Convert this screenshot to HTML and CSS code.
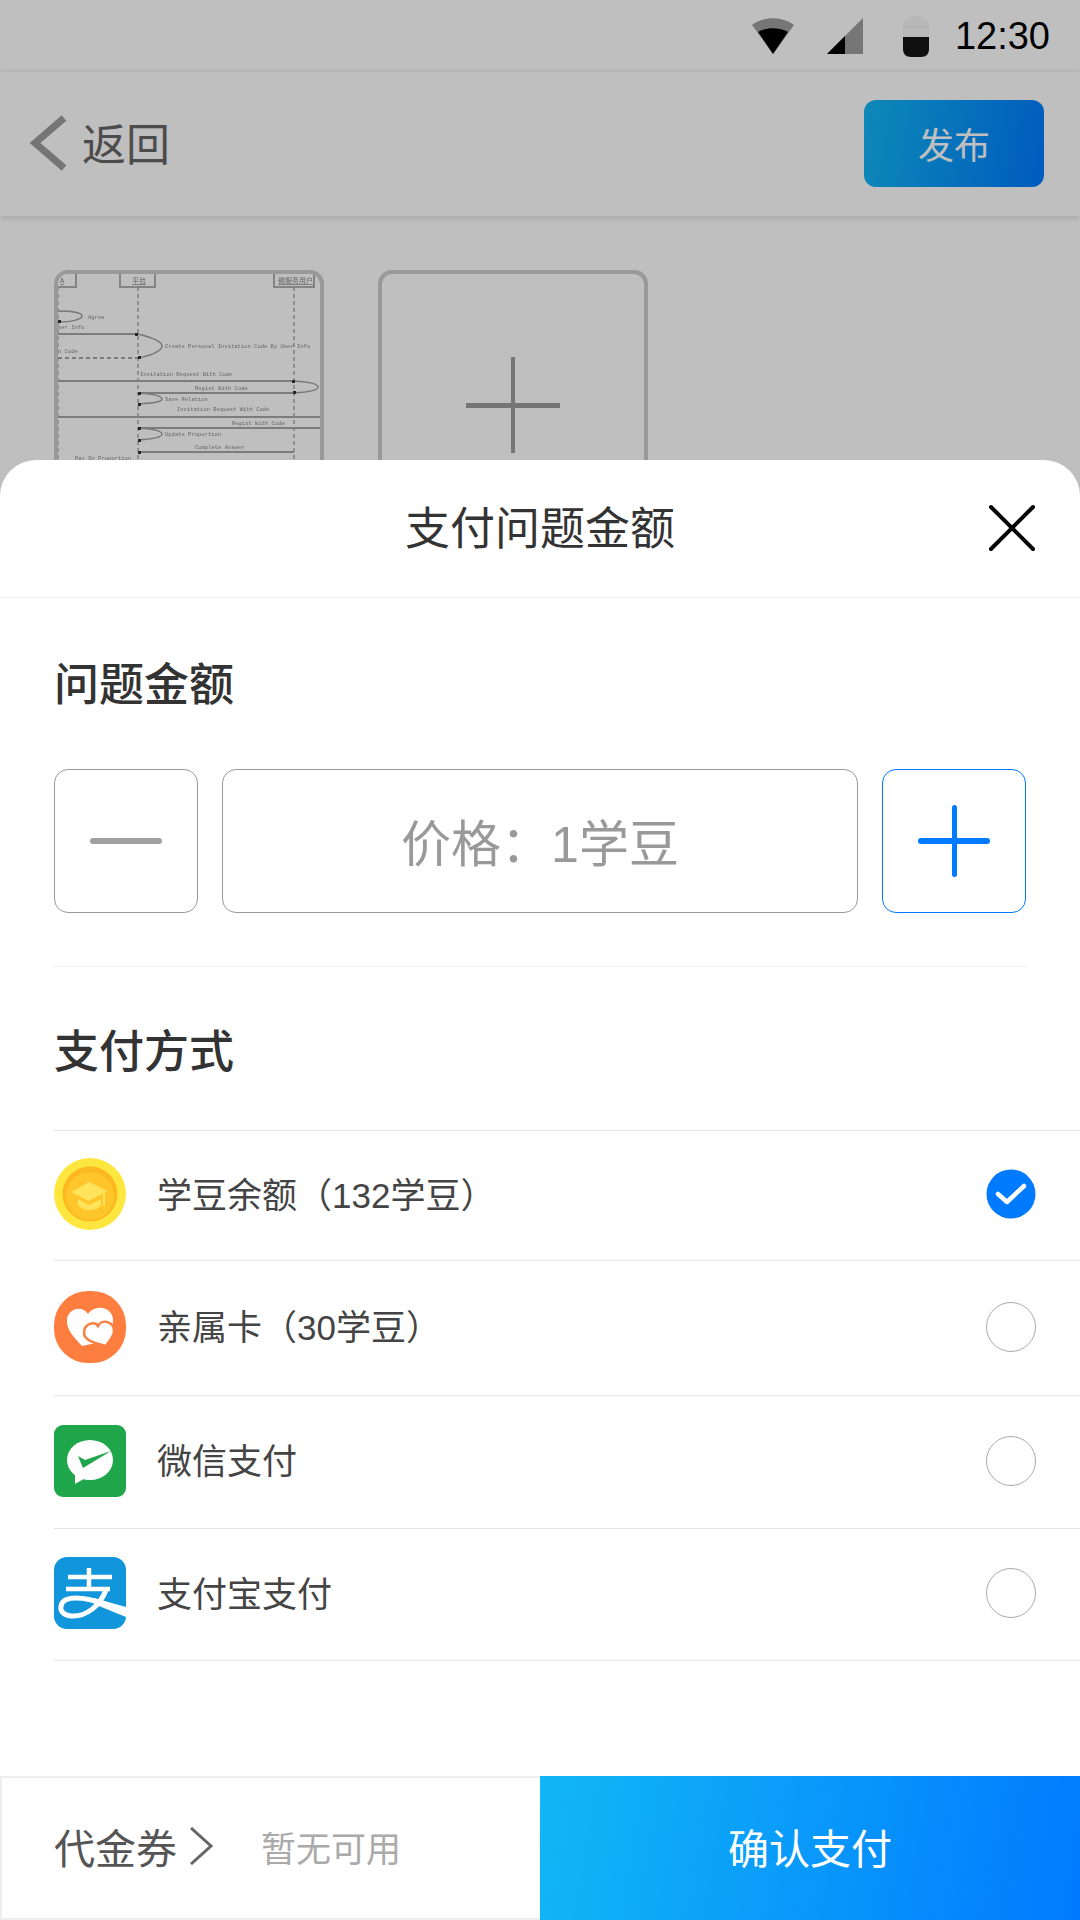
FILE: index.html
```html
<!DOCTYPE html>
<html lang="zh-CN">
<head>
  <meta charset="UTF-8">
  <title>支付问题金额</title>
  <link rel="stylesheet" href="styles.css">
</head>
<body>

  <div class="page">
    <div class="status-bar">
      <svg class="wifi" width="42" height="36" viewBox="0 0 42 36">
        <path d="M0 7 C12 -2 30 -2 42 7 L21 36 Z" fill="#9e9e9e"/>
        <path d="M6 14 C15 9 27 9 36 14 L21 36 Z" fill="#000"/>
      </svg>
      <svg class="signal" width="36" height="36" viewBox="0 0 36 36">
        <path d="M36 0 V36 H0 Z" fill="#9e9e9e"/>
        <path d="M18 18 V36 H0 Z" fill="#000"/>
      </svg>
      <svg class="battery" width="26" height="41" viewBox="0 0 26 41">
        <path d="M0 10 C0 3 5 0 13 0 C21 0 26 3 26 10 V33 C26 38 23 41 18 41 H8 C3 41 0 38 0 33 Z" fill="#f6f6f6"/>
        <path d="M0 21 H26 V33 C26 38 23 41 18 41 H8 C3 41 0 38 0 33 Z" fill="#161616"/>
        <path d="M0 11 H26" stroke="#e8e8e8" stroke-width="1"/>
      </svg>
      <span class="time">12:30</span>
    </div>

    <header class="top-bar">
      <a class="back">
        <svg width="38" height="56" viewBox="0 0 38 56">
          <path d="M35 3 L6 28 L35 53" fill="none" stroke="#9c9c9c" stroke-width="7"/>
        </svg>
        <span>返回</span>
      </a>
      <button class="publish">发布</button>
    </header>

    <div class="uploads">
      <div class="thumb">
        <svg width="262" height="262" viewBox="58 274 262 262">
          <g fill="#fff" stroke="#b0b0b0" stroke-width="2">
            <rect x="50" y="270" width="26" height="17"/>
            <rect x="120" y="270" width="35" height="17"/>
            <rect x="274" y="270" width="40" height="17"/>
          </g>
          <g class="uml-text uml-head">
            <text x="60" y="283">A</text>
            <text x="132" y="283">平台</text>
            <text x="278" y="283">微服务用户</text>
          </g>
          <g fill="none" stroke="#aaa" stroke-width="1.5" stroke-dasharray="4 3">
            <path d="M58 287 V540"/>
            <path d="M138 287 V540"/>
            <path d="M294 287 V540"/>
          </g>
          <g fill="none" stroke="#a6a6a6" stroke-width="2">
            <path d="M58 334 H138"/>
            <path d="M58 358 H138" stroke-dasharray="4 3"/>
            <path d="M58 381 H294"/>
            <path d="M138 393 H294"/>
            <path d="M58 417 H320"/>
            <path d="M138 428 H320"/>
            <path d="M138 452 H294"/>
          </g>
          <g fill="none" stroke="#a0a0a0" stroke-width="1.5">
            <path d="M58 311 C72 311 82 313 82 316 C82 319 72 322 60 322"/>
            <path d="M138 334 C154 338 162 342 162 346 C162 350 154 355 138 358"/>
            <path d="M294 381 C310 382 318 384 318 387 C318 390 310 392 294 393"/>
            <path d="M138 393 C154 394 162 396 162 399 C162 402 154 403 138 404"/>
            <path d="M138 428 C154 429 162 431 162 434 C162 437 154 439 138 440"/>
          </g>
          <g fill="#333">
            <rect x="58" y="320" width="3" height="3"/>
            <rect x="135" y="333" width="3" height="3"/>
            <rect x="138" y="356" width="3" height="3"/>
            <rect x="292" y="380" width="3" height="3"/>
            <rect x="293" y="391" width="3" height="3"/>
            <rect x="138" y="392" width="3" height="3"/>
            <rect x="138" y="403" width="3" height="3"/>
            <rect x="138" y="427" width="3" height="3"/>
            <rect x="138" y="439" width="3" height="3"/>
            <rect x="138" y="451" width="3" height="3"/>
          </g>
          <g class="uml-text">
            <text x="88" y="319">Agree</text>
            <text x="58" y="329">ser Info</text>
            <text x="165" y="348">Create Personal Invitation Code By User Info</text>
            <text x="58" y="353">n Code</text>
            <text x="140" y="376">Invitation Request With Code</text>
            <text x="195" y="390">Regist With Code</text>
            <text x="165" y="401">Save Relation</text>
            <text x="177" y="411">Invitation Request With Code</text>
            <text x="232" y="425">Regist With Code</text>
            <text x="165" y="436">Update Proportion</text>
            <text x="195" y="449">Complete Answer</text>
            <text x="75" y="460">Pay On Proportion</text>
          </g>
        </svg>
      </div>
      <div class="thumb add">
        <span class="add-h"></span>
        <span class="add-v"></span>
      </div>
    </div>
  </div>

  <div class="dim"></div>

  <section class="sheet">
    <div class="sheet-head">
      <h2>支付问题金额</h2>
      <svg class="close" width="48" height="48" viewBox="0 0 48 48">
        <path d="M3 3 L45 45 M45 3 L3 45" stroke="#000" stroke-width="4" stroke-linecap="round"/>
      </svg>
    </div>

    <div class="amount">
      <h3>问题金额</h3>
      <div class="stepper">
        <div class="step minus"><span></span></div>
        <div class="price">价格：1学豆</div>
        <div class="step plus"><span></span><span class="v"></span></div>
      </div>
    </div>

    <div class="pay">
      <h3>支付方式</h3>
      <ul class="methods">
        <li>
          <svg class="method-icon" width="72" height="72" viewBox="0 0 72 72">
            <circle cx="36" cy="36" r="36" fill="#fde73e"/>
            <circle cx="36" cy="36" r="27.5" fill="#fdb71f"/>
            <circle cx="36" cy="38" r="24" fill="#ffc62b"/>
            <path d="M17 34 L35 24 L53 33 L35 43 Z" fill="#ffe35a"/>
            <path d="M24 41 L35 47 L47 41 V47 C42 54 29 54 24 47 Z" fill="#ffe35a"/>
            <path d="M50 35 V48" stroke="#ffe35a" stroke-width="2"/>
          </svg>
          <span class="method-name">学豆余额（132学豆）</span>
          <svg class="radio" width="50" height="50" viewBox="0 0 50 50">
            <circle cx="25" cy="25" r="24.5" fill="#007aff"/>
            <path d="M12 25 L21 33 L38 17" fill="none" stroke="#fff" stroke-width="4.5" stroke-linecap="round" stroke-linejoin="round"/>
          </svg>
        </li>
        <li>
          <svg class="method-icon" width="72" height="72" viewBox="0 0 72 72">
            <rect width="72" height="72" rx="34" fill="#fd7e3f"/>
            <path d="M28 55 C20 46 12 39 13 28 C14 19 27 13 34 23 C40 14 57 14 59 28 C60 38 50 46 42 52 Z" fill="#fff"/>
            <path d="M52 55 C44 53 30 50 30 42 C30 32 41 30 44 35 C48 27 60 31 60 40 C60 46 55 50 52 55 Z" fill="#fff" stroke="#fd7e3f" stroke-width="2.5"/>
          </svg>
          <span class="method-name">亲属卡（30学豆）</span>
          <span class="radio off"></span>
        </li>
        <li>
          <svg class="method-icon" width="72" height="72" viewBox="0 0 72 72">
            <rect width="72" height="72" rx="9" fill="#1fa54a"/>
            <ellipse cx="36" cy="35" rx="23" ry="20" fill="#fff"/>
            <path d="M21 46 L21 59 L33 52 Z" fill="#fff"/>
            <path d="M24 31 L29 43 L57 26 L31 35 Z" fill="#1fa54a"/>
          </svg>
          <span class="method-name">微信支付</span>
          <span class="radio off"></span>
        </li>
        <li>
          <svg class="method-icon" width="72" height="72" viewBox="0 0 72 72">
            <defs>
              <clipPath id="ali"><rect width="72" height="72" rx="13"/></clipPath>
            </defs>
            <rect width="72" height="72" rx="13" fill="#1296db"/>
            <g clip-path="url(#ali)">
              <path d="M14 20 H58 M12 32 H56 M35 11 V32" fill="none" stroke="#fff" stroke-width="4.5"/>
              <path d="M52 33 C46 49 32 60 17 59 C9 58 6 54 7 49 C8 43 14 41 22 41 C32 41 42 44 50 47" fill="none" stroke="#fff" stroke-width="5"/>
              <path d="M40 41 L72 50 V60 L40 47 Z" fill="#fff"/>
            </g>
          </svg>
          <span class="method-name">支付宝支付</span>
          <span class="radio off"></span>
        </li>
      </ul>
    </div>

    <footer class="pay-bar">
      <div class="coupon">
        <span class="coupon-label">代金券</span>
        <svg width="26" height="38" viewBox="0 0 26 38">
          <path d="M3 1 L23 19 L3 37" fill="none" stroke="#666" stroke-width="3"/>
        </svg>
        <span class="coupon-note">暂无可用</span>
      </div>
      <button class="confirm">确认支付</button>
    </footer>
  </section>

</body>
</html>
```

FILE: styles.css
```css
* {
  box-sizing: border-box;
}

html, body {
  margin: 0;
  padding: 0;
}

body {
  position: relative;
  width: 1080px;
  height: 1920px;
  overflow: hidden;
  background: #fff;
  font-family: "Liberation Sans", "Noto Sans CJK SC", sans-serif;
  color: #333;
}

h2, h3 {
  margin: 0;
  font-weight: normal;
}

button {
  border: none;
  padding: 0;
  font-family: inherit;
  color: #fff;
}

/* page underneath the sheet */
.status-bar {
  display: flex;
  justify-content: flex-end;
  align-items: center;
  height: 72px;
  padding-right: 30px;
  padding-top: 2px;
  background: #fff;
  border-bottom: 2px solid #f6f6f6;
}

.wifi {
  margin-right: 33px;
}

.signal {
  margin-right: 40px;
}

.battery {
  margin-right: 26px;
}

.time {
  font-size: 38px;
  color: #000;
}

.top-bar {
  display: flex;
  justify-content: space-between;
  align-items: center;
  height: 144px;
  padding: 0 36px 2px 28px;
  background: #fff;
  box-shadow: 0 2px 6px rgba(0, 0, 0, 0.12);
}

.back {
  display: flex;
  align-items: center;
  gap: 16px;
  font-size: 44px;
  color: #666;
}

.back svg {
  margin-left: 1px;
}

.back span {
  margin-left: -1px;
  margin-bottom: 3px;
}

.publish {
  width: 180px;
  height: 87px;
  border-radius: 12px;
  background: linear-gradient(100deg, #12b7f5, #007aff);
  font-size: 36px;
}

.uploads {
  display: flex;
  gap: 54px;
  padding: 54px 0 0 54px;
}

.thumb {
  position: relative;
  width: 270px;
  height: 270px;
  border: 4px solid #ccc;
  border-radius: 14px;
  overflow: hidden;
}

.thumb svg {
  display: block;
  filter: blur(0.5px);
}

.uml-text {
  font-family: "Liberation Mono", "Noto Sans CJK SC", monospace;
  font-size: 5.5px;
  fill: #888;
}

.uml-head {
  font-size: 7px;
  text-decoration: underline;
}

.add-h, .add-v {
  position: absolute;
  background: #9c9c9c;
}

.add-h {
  left: 84px;
  top: 129px;
  width: 94px;
  height: 5px;
}

.add-v {
  left: 129px;
  top: 83px;
  width: 4px;
  height: 96px;
}

.dim {
  position: absolute;
  top: 0;
  left: 0;
  right: 0;
  bottom: 0;
  background: rgba(0, 0, 0, 0.25);
}

/* bottom sheet */
.sheet {
  position: absolute;
  top: 460px;
  left: 0;
  right: 0;
  bottom: 0;
  display: flex;
  flex-direction: column;
  background: #fff;
  border-radius: 36px 36px 0 0;
}

.sheet-head {
  position: relative;
  display: flex;
  justify-content: center;
  align-items: center;
  height: 138px;
  padding-bottom: 6px;
  border-bottom: 1px solid #eee;
}

.sheet-head h2 {
  font-size: 45px;
  color: #333;
}

.close {
  position: absolute;
  top: 44px;
  right: 44px;
}

.amount {
  margin: 0 54px;
  padding: 58px 0 53px;
  border-bottom: 1px solid #eee;
}

.amount h3, .pay h3 {
  font-size: 45px;
  line-height: 60px;
  font-weight: 500;
  color: #333;
}

.stepper {
  display: flex;
  gap: 24px;
  margin-top: 53px;
}

.step, .price {
  display: flex;
  justify-content: center;
  align-items: center;
  height: 144px;
  border: 1.5px solid #999;
  border-radius: 14px;
}

.step {
  position: relative;
  width: 144px;
}

.price {
  flex: 1;
  padding-bottom: 2px;
  font-size: 50px;
  color: #999;
}

.step span {
  display: block;
  width: 72px;
  height: 6px;
  border-radius: 3px;
  background: #a0a0a0;
}

.plus {
  border-color: #007aff;
}

.plus span {
  background: #007aff;
}

.plus .v {
  position: absolute;
  width: 5px;
  height: 72px;
}

.pay {
  padding-top: 56px;
}

.pay h3 {
  margin-left: 54px;
}

.methods {
  display: grid;
  grid-template-rows: 130px 135px 133px 132px;
  margin: 47px 0 0 54px;
  padding: 0;
  list-style: none;
  border-bottom: 1px solid #e5e5e5;
}

.methods li {
  display: flex;
  align-items: center;
  padding-right: 44px;
  padding-bottom: 3px;
  border-top: 1px solid #e5e5e5;
}

.method-icon {
  flex: none;
}

.method-name {
  flex: 1;
  margin-left: 31px;
  margin-bottom: 4px;
  font-size: 35px;
  color: #444;
}

.radio {
  flex: none;
  display: block;
  width: 50px;
  height: 50px;
}

.radio.off {
  border: 1.5px solid #aaa;
  border-radius: 50%;
}

.pay-bar {
  display: flex;
  height: 144px;
  margin-top: auto;
}

.coupon {
  display: flex;
  align-items: center;
  width: 540px;
  padding-left: 52px;
  padding-bottom: 4px;
  border: 2px solid #eee;
  border-right: none;
}

.coupon-label {
  font-size: 41px;
  color: #555;
}

.coupon svg {
  margin-left: 11px;
}

.coupon-note {
  margin-left: 47px;
  font-size: 35px;
  color: #aaa;
}

.confirm {
  width: 540px;
  padding-bottom: 4px;
  background: linear-gradient(100deg, #12b7f5, #007aff);
  font-size: 41px;
}
```
